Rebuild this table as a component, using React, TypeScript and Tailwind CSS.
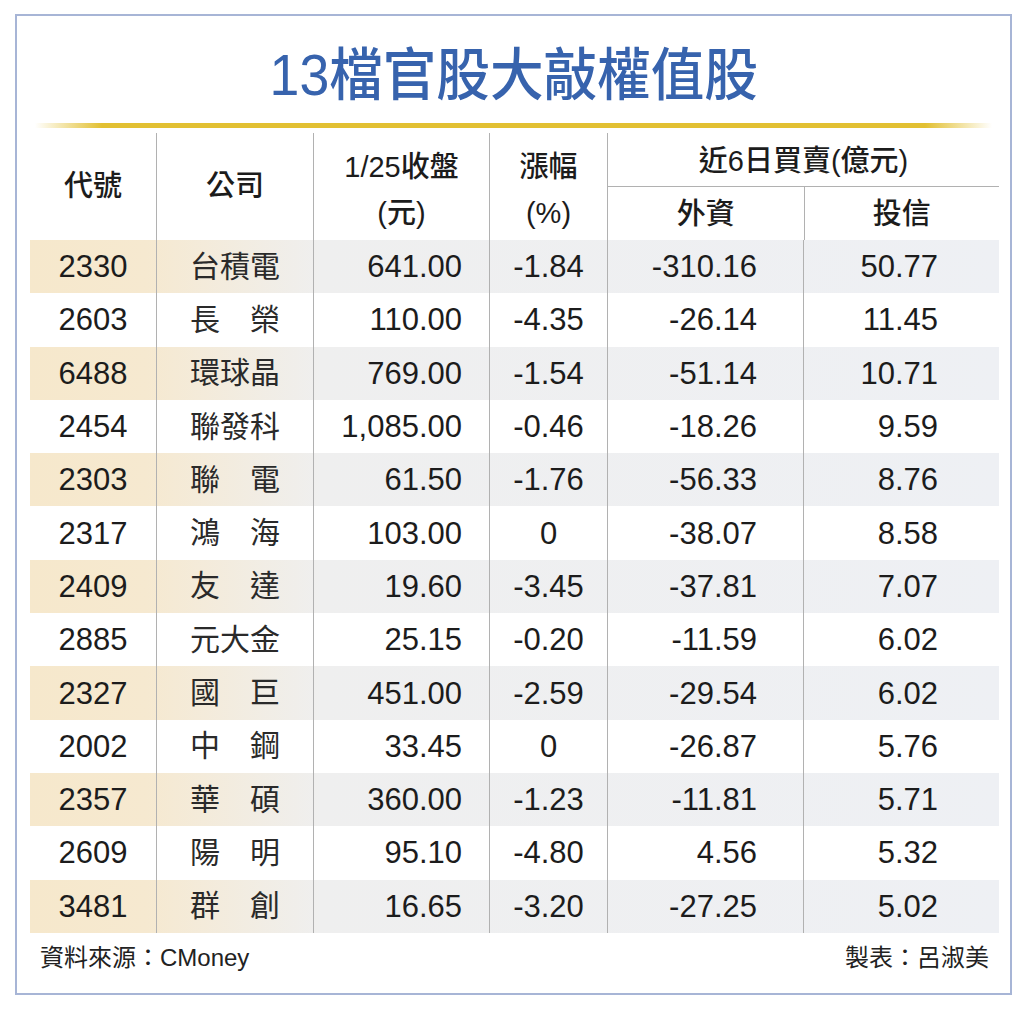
import React from "react";

const rows: [string, string, string, string, string, string][] = [
  ["2330", "台積電", "641.00", "-1.84", "-310.16", "50.77"],
  ["2603", "長　榮", "110.00", "-4.35", "-26.14", "11.45"],
  ["6488", "環球晶", "769.00", "-1.54", "-51.14", "10.71"],
  ["2454", "聯發科", "1,085.00", "-0.46", "-18.26", "9.59"],
  ["2303", "聯　電", "61.50", "-1.76", "-56.33", "8.76"],
  ["2317", "鴻　海", "103.00", "0", "-38.07", "8.58"],
  ["2409", "友　達", "19.60", "-3.45", "-37.81", "7.07"],
  ["2885", "元大金", "25.15", "-0.20", "-11.59", "6.02"],
  ["2327", "國　巨", "451.00", "-2.59", "-29.54", "6.02"],
  ["2002", "中　鋼", "33.45", "0", "-26.87", "5.76"],
  ["2357", "華　碩", "360.00", "-1.23", "-11.81", "5.71"],
  ["2609", "陽　明", "95.10", "-4.80", "4.56", "5.32"],
  ["3481", "群　創", "16.65", "-3.20", "-27.25", "5.02"],
];

const font = "font-['Liberation_Sans','Noto_Sans_CJK_TC',sans-serif]";

export default function App() {
  return (
    <div className={`w-[1024px] h-[1012px] bg-white pt-[14px] pl-[15px] ${font}`}>
      <div className="w-[997px] h-[981px] border-2 border-[#a7b5d6] flex flex-col">
        <div className="mt-[30px] h-[58px] flex items-center justify-center">
          <div className="text-[57px] leading-none font-medium text-[#3763ad] scale-x-[0.94] whitespace-nowrap">
            13檔官股大敲權值股
          </div>
        </div>
        <div className="mt-[19px] ml-[18px] w-[957px] h-[5px] bg-[linear-gradient(90deg,rgba(224,191,44,0)_0%,#e2c032_7%,#e2c032_93%,rgba(224,191,44,0)_100%)]" />
        <div className="ml-[13px] mt-[5px] w-[969px] flex flex-col text-[#1c1c1c]">
          {/* header */}
          <div className="flex h-[107px] text-[29px] font-medium">
            <div className="w-[126px] flex items-center justify-center">代號</div>
            <div className="w-[157px] flex items-center justify-center border-l border-[#b1b1b1]">公司</div>
            <div className="w-[176px] flex flex-col items-center justify-center border-l border-[#b1b1b1] pt-[6px] leading-[46px]">
              <span>1/25收盤</span>
              <span>(元)</span>
            </div>
            <div className="w-[118px] flex flex-col items-center justify-center border-l border-[#b1b1b1] pt-[6px] leading-[46px]">
              <span>漲幅</span>
              <span>(%)</span>
            </div>
            <div className="w-[392px] flex flex-col border-l border-[#b1b1b1]">
              <div className="h-[54px] flex items-center justify-center border-b border-[#b1b1b1] pt-[4px]">近6日買賣(億元)</div>
              <div className="flex-1 flex">
                <div className="w-[196px] flex items-center justify-center pt-[3px]">外資</div>
                <div className="w-[196px] flex items-center justify-center border-l border-[#b1b1b1] pt-[3px]">投信</div>
              </div>
            </div>
          </div>
          {/* body */}
          {rows.map((r, i) => (
            <div
              key={r[0]}
              className={`flex h-[53.3px] items-stretch text-[31px] leading-none ${
                i % 2 === 0
                  ? "bg-[linear-gradient(90deg,#f6e8cc_0%,#f6e9d0_12%,#efefef_30%,#eef0f4_100%)]"
                  : ""
              }`}
            >
              <div className="w-[126px] flex items-center justify-center">{r[0]}</div>
              <div className="w-[157px] flex items-center justify-center border-l border-[#b1b1b1] text-[30px] text-[#2a2a2a]">{r[1]}</div>
              <div className="w-[176px] flex items-center justify-end pr-[27px] border-l border-[#b1b1b1]">{r[2]}</div>
              <div className="w-[118px] flex items-center justify-center border-l border-[#b1b1b1]">{r[3]}</div>
              <div className="w-[196px] flex items-center justify-end pr-[46px] border-l border-[#b1b1b1]">{r[4]}</div>
              <div className="w-[196px] flex items-center justify-end pr-[61px] border-l border-[#b1b1b1]">{r[5]}</div>
            </div>
          ))}
          {/* footer */}
          <div className="mt-[10px] flex justify-between px-[10px] text-[24px] leading-[30px] text-[#222]">
            <span>資料來源：CMoney</span>
            <span>製表：呂淑美</span>
          </div>
        </div>
      </div>
    </div>
  );
}
